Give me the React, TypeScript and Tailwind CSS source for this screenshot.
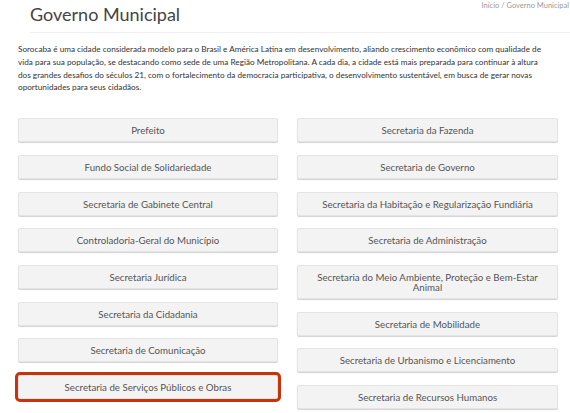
const left = [
  'Prefeito',
  'Fundo Social de Solidariedade',
  'Secretaria de Gabinete Central',
  'Controladoria-Geral do Município',
  'Secretaria Jurídica',
  'Secretaria da Cidadania',
  'Secretaria de Comunicação',
  'Secretaria de Serviços Públicos e Obras',
]

const right = [
  'Secretaria da Fazenda',
  'Secretaria de Governo',
  'Secretaria da Habitação e Regularização Fundiária',
  'Secretaria de Administração',
  'Secretaria do Meio Ambiente, Proteção e Bem-Estar Animal',
  'Secretaria de Mobilidade',
  'Secretaria de Urbanismo e Licenciamento',
  'Secretaria de Recursos Humanos',
]

const active = 'Secretaria de Serviços Públicos e Obras'

function SecretariaButton({ label }: { label: string }) {
  const selected = label === active
  return (
    <a
      href="#"
      className={`block rounded-[2px] border border-[#e4e4e4] bg-[#f3f3f3] px-[12px] py-[6px] text-center text-[9.7px] leading-[10px] text-[#555] shadow-[0_1px_1px_rgba(0,0,0,0.18)] ${
        selected ? 'outline-[3px] outline-solid outline-[#c8330c]' : ''
      }`}
    >
      {label}
    </a>
  )
}

export default function App() {
  return (
    <div className="h-[413px] w-[570px] overflow-hidden bg-white font-['Lato','Open_Sans',sans-serif]">
      <header className="relative ml-[30px] border-b border-[#efefef] pb-[7px] pt-[3px]">
        <h1 className="text-[18px] font-normal leading-[22px] text-[#444]">Governo Municipal</h1>
        <nav className="absolute right-[1px] top-[1px] text-[7.5px] leading-[10px] text-[#9a9a9a]">
          Início / Governo Municipal
        </nav>
      </header>

      <main className="mx-[18px] mt-[10px]">
        <p className="text-[8.2px] leading-[12.8px] text-[#333]">
          Sorocaba é uma cidade considerada modelo para o Brasil e América Latina em desenvolvimento, aliando
          crescimento econômico com qualidade de vida para sua população, se destacando como sede de uma Região
          Metropolitana. A cada dia, a cidade está mais preparada para continuar à altura dos grandes desafios do
          séculos 21, com o fortalecimento da democracia participativa, o desenvolvimento sustentável, em busca de
          gerar novas oportunidades para seus cidadãos.
        </p>

        <div className="mt-[24px] grid grid-cols-[260px_261px] gap-x-[19px]">
          <div className="flex flex-col gap-[12.7px]">
            {left.map((label) => (
              <SecretariaButton key={label} label={label} />
            ))}
          </div>
          <div className="flex flex-col gap-[12.7px]">
            {right.map((label) => (
              <SecretariaButton key={label} label={label} />
            ))}
          </div>
        </div>
      </main>
    </div>
  )
}
